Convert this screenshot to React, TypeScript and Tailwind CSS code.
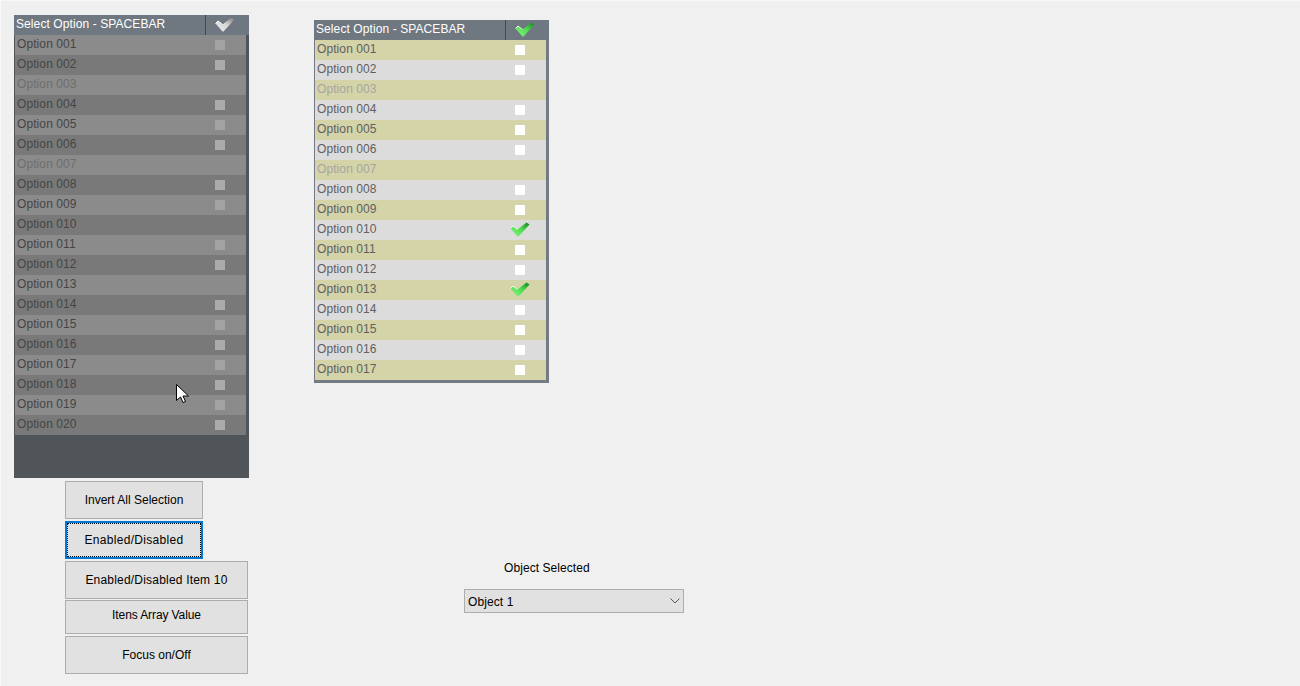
const leftOptions = Array.from({ length: 20 }, (_, i) => i + 1)
const rightOptions = Array.from({ length: 17 }, (_, i) => i + 1)
const disabled = [3, 7]
const checked = [10, 13]

function label(n: number) {
  return 'Option ' + String(n).padStart(3, '0')
}

function Check({ grey = false }: { grey?: boolean }) {
  const id = grey ? 'check-grey' : 'check-green'
  return (
    <svg width="20" height="15" viewBox="0 0 20 15" className="block">
      <defs>
        <linearGradient id={id} x1="0" y1="1" x2="1" y2="0">
          <stop offset="0" stopColor={grey ? '#eeeeee' : '#8df58d'} />
          <stop offset="0.55" stopColor={grey ? '#d6d6d6' : '#4fdc4f'} />
          <stop offset="1" stopColor={grey ? '#707070' : '#12801f'} />
        </linearGradient>
      </defs>
      <polygon points="0.5,6.5 3,4 7.5,7.5 16.5,0.5 19.5,2.5 8.5,14.5 7.5,14.5" fill={`url(#${id})`} />
      <polyline points="0.5,6.5 3,4 7.5,7.5" fill="none" stroke={grey ? '#ffffff' : '#e4ffe4'} strokeWidth="1" />
    </svg>
  )
}

function Cursor() {
  return (
    <svg width="13" height="20" viewBox="0 0 13 20" className="absolute left-[175px] top-[383px]">
      <path d="M0.5 0.5V16.5L4.5 13L7 18.5L9.5 17.5L7 12H12.5Z" fill="#ffffff" stroke="#000000" strokeWidth="1" />
    </svg>
  )
}

function Header({ grey = false }: { grey?: boolean }) {
  return (
    <div className="flex h-5 bg-[#6f7780] text-white">
      <div className="w-[191px] pl-[2px] leading-[18px] tracking-[0.09px]">Select Option - SPACEBAR</div>
      <div className="flex flex-1 border-l border-[#3e4658] pl-[9px] pt-[2px]">
        <Check grey={grey} />
      </div>
    </div>
  )
}

function Button({ text, className }: { text: string; className: string }) {
  return (
    <button className={`border border-[#adadad] bg-[#e1e1e1] text-black ${className}`}>
      {text}
    </button>
  )
}

export default function App() {
  return (
    <div className="relative flex h-[686px] overflow-hidden border-l border-t border-[#f8f8f8] bg-[#f0f0f0] font-['Liberation_Sans',Arial,sans-serif] text-xs">

      {/* Disabled list and its buttons */}
      <div className="ml-[13px] mt-[14px] w-[235px]">
        <div className="h-[463px] bg-[#50555a]">
          <Header grey />
          <div className="ml-px mr-[3px]">
            {leftOptions.map((n) => (
              <div key={n} className={`flex h-5 ${n % 2 ? 'bg-[#8b8b8b]' : 'bg-[#797979]'}`}>
                <span className={`w-[200px] pl-[2px] leading-[18px] tracking-[0.09px] ${disabled.includes(n) ? 'text-[#6e6e6e]' : 'text-[#454545]'}`}>
                  {label(n)}
                </span>
                {!disabled.includes(n) && !checked.includes(n) && (
                  <span className={`mt-[5px] h-2.5 w-2.5 ${n % 2 ? 'bg-[#a3a3a3]' : 'bg-[#ababab]'}`} />
                )}
              </div>
            ))}
          </div>
        </div>

        {/* Buttons */}
        <div className="ml-[51px] mt-[3px] flex flex-col items-start">
          <Button text="Invert All Selection" className="h-[38px] w-[138px]" />
          <button className="mt-[2px] h-[38px] w-[138px] border-2 border-[#0078d7] bg-[#e1e1e1] text-black">
            <span className="flex h-full items-center justify-center border border-dotted border-black tracking-[0.3px]">Enabled/Disabled</span>
          </button>
          <Button text="Enabled/Disabled Item 10" className="mt-[2px] h-[38px] w-[183px] tracking-[0.2px]" />
          <Button text="Itens Array Value" className="mt-px h-[34px] w-[183px] pb-1 tracking-[-0.1px]" />
          <Button text="Focus on/Off" className="mt-[2px] h-[38px] w-[183px]" />
        </div>
      </div>

      {/* Enabled list and select */}
      <div className="ml-[65px] mt-[19px] w-[370px]">
        <div className="w-[235px] bg-[#747b84] pb-[3px]">
          <Header />
          <div className="ml-px mr-[3px]">
            {rightOptions.map((n) => (
              <div key={n} className={`flex h-5 ${n % 2 ? 'bg-[#d4d4a8]' : 'bg-[#dcdcdc]'}`}>
                <span className={`w-[200px] pl-[2px] leading-[18px] tracking-[0.09px] ${disabled.includes(n) ? 'text-[#a6a6a0]' : 'text-[#606064]'}`}>
                  {label(n)}
                </span>
                {checked.includes(n) ? (
                  <span className="-ml-[5px] mt-[2px]"><Check /></span>
                ) : (
                  !disabled.includes(n) && <span className="mt-[5px] h-2.5 w-2.5 bg-white" />
                )}
              </div>
            ))}
          </div>
        </div>

        <div className="ml-[150px] mt-[176px] w-[220px]">
          <div className="ml-10 h-[18px] leading-[18px] tracking-[0.07px] text-black">Object Selected</div>
          <div className="mt-3 flex h-6 items-center justify-between border border-[#adadad] bg-[#e1e1e1] pl-[3px] pr-[3px] pt-[2px] text-black">
            <span className="tracking-[0.1px]">Object 1</span>
            <svg width="10" height="6" viewBox="0 0 10 6" className="-mt-[2px]">
              <path d="M0.5 0.5L5 5L9.5 0.5" fill="none" stroke="#555555" strokeWidth="1" />
            </svg>
          </div>
        </div>
      </div>

      <Cursor />
    </div>
  )
}
